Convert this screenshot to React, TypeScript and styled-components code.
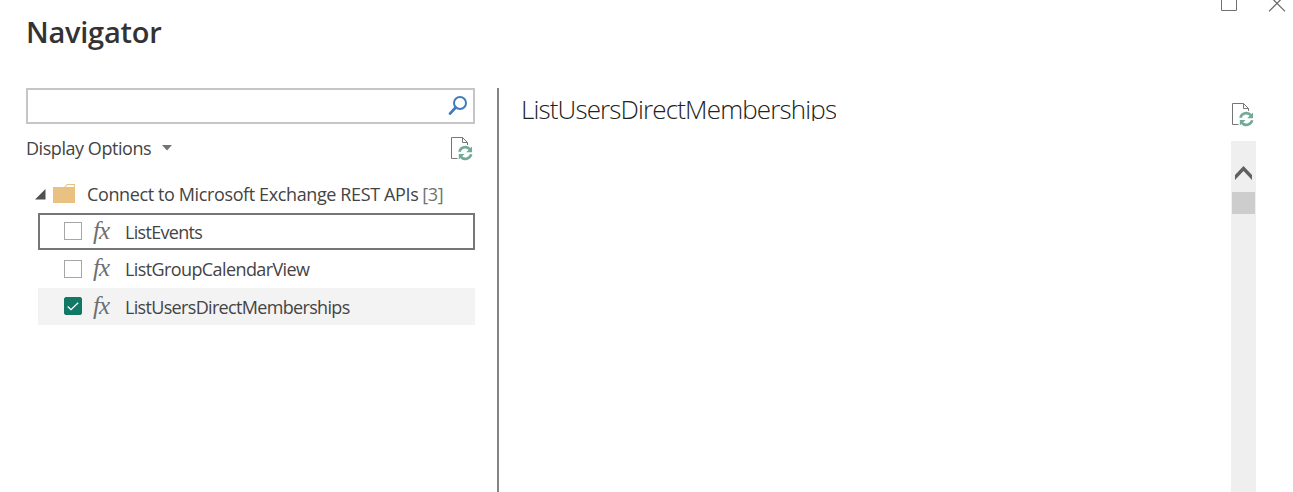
import React from "react";
import styled, { createGlobalStyle } from "styled-components";

const GlobalStyle = createGlobalStyle`
  *, *::before, *::after { box-sizing: border-box; }
  body {
    margin: 0;
    background: #fff;
    color: #444;
    font-family: "Open Sans", "Noto Sans", sans-serif;
    overflow: hidden;
  }
`;

const Dialog = styled.div`
  display: flex;
  flex-direction: column;
  width: 100%;
  height: 492px;
  overflow: hidden;
  background: #fff;
`;

const Header = styled.header`
  display: flex;
  justify-content: space-between;
  align-items: flex-start;
  flex: none;
  height: 88px;
  padding: 0 7px 0 26px;
`;

const Heading = styled.h1`
  margin: 12px 0 0;
  font-size: 29px;
  line-height: 40px;
  font-weight: 600;
  letter-spacing: -0.25px;
  color: #333;
`;

const WindowControls = styled.div`
  display: flex;
  gap: 30px;
`;

const Content = styled.main`
  display: grid;
  grid-template-columns: 449px 2px 1fr;
  column-gap: 22px;
  flex: 1;
  min-height: 0;
  padding: 0 37px 0 26px;
`;

const Sidebar = styled.aside`
  display: flex;
  flex-direction: column;
`;

const SearchBox = styled.div`
  display: flex;
  align-items: center;
  justify-content: flex-end;
  height: 36px;
  padding-right: 5px;
  border: 2px solid #c6c6c6;
`;

const OptionsBar = styled.div`
  display: flex;
  align-items: center;
  height: 48px;
  margin-bottom: 2px;
`;

const Label = styled.span<{ $spacing?: number }>`
  font-size: 18px;
  line-height: 24px;
  letter-spacing: ${({ $spacing = -0.38 }) => $spacing}px;
  white-space: nowrap;
`;

const DropArrow = styled.svg`
  margin-left: 11px;
  margin-right: auto;
`;

const FolderRow = styled.div`
  display: flex;
  align-items: center;
  height: 39px;
  padding-left: 9px;
`;

const ExpandArrow = styled.svg`
  margin-top: 2px;
`;

const FolderGlyph = styled.svg`
  margin: 0 12px 0 7px;
`;

const Count = styled(Label)`
  margin-left: 4px;
  color: #737373;
`;

const FunctionList = styled.div`
  display: grid;
  grid-template-rows: 37px 38px 37px;
  margin-left: 12px;
`;

const FunctionRow = styled.div<{ $focused?: boolean; $selected?: boolean }>`
  display: flex;
  align-items: center;
  padding-left: 24px;
  border: 2px solid ${({ $focused }) => ($focused ? "#767676" : "transparent")};
  background: ${({ $selected }) => ($selected ? "#f3f3f3" : "#fff")};
`;

const CheckBox = styled.span<{ $checked?: boolean }>`
  display: flex;
  align-items: center;
  justify-content: center;
  width: 18px;
  height: 18px;
  margin-bottom: 1px;
  border: 1px solid ${({ $checked }) => ($checked ? "#117865" : "#a6a6a6")};
  border-radius: ${({ $checked }) => ($checked ? 2 : 0)}px;
  background: ${({ $checked }) => ($checked ? "#117865" : "#fff")};
`;

const Fx = styled.span`
  width: 43px;
  padding-left: 11px;
  margin-top: -2px;
  font: italic 25px/30px "Liberation Serif", serif;
  letter-spacing: -1px;
  color: #6f6f6f;
`;

const Divider = styled.div`
  background: #848484;
`;

const Preview = styled.section`
  display: flex;
  justify-content: space-between;
  min-width: 0;
`;

const PreviewTitle = styled.h2`
  height: 33px;
  margin: 0;
  overflow: hidden;
  font-size: 26px;
  line-height: 43px;
  font-weight: 300;
  letter-spacing: -0.86px;
  color: #222;
  white-space: nowrap;
`;

const PreviewTools = styled.div`
  display: flex;
  flex-direction: column;
  width: 25px;
  padding-top: 14px;
`;

const ScrollTrack = styled.div`
  display: flex;
  flex-direction: column;
  align-items: center;
  flex: 1;
  margin-top: 14px;
  padding-top: 25px;
  background: #efefef;
`;

const ScrollThumb = styled.div`
  width: 23px;
  height: 22px;
  margin-top: 12px;
  background: #cdcdcd;
`;

const RefreshIcon = () => (
  <svg width="25" height="25" viewBox="0 0 25 25" fill="none">
    <path d="M7.5 22.5H1.5V1.5H12.5L17.5 6.5V9" stroke="#767676" />
    <path d="M12.5 1.5V6.5H17.5" stroke="#767676" />
    <path d="M9.4 15.8A6.1 6.1 0 0 1 20 13.4M21.2 18.2A6.1 6.1 0 0 1 10.6 20.6" stroke="#72aa98" strokeWidth="2.6" />
    <path d="M22 10.5V16.2H16.2ZM8.8 23.5V18H14.6Z" fill="#72aa98" />
  </svg>
);

const rows = [
  { name: "ListEvents", focused: true, spacing: -0.7 },
  { name: "ListGroupCalendarView", spacing: -0.6 },
  { name: "ListUsersDirectMemberships", selected: true, spacing: -0.67 },
];

export default function App() {
  return (
    <>
      <GlobalStyle />
      <Dialog>
        <Header>
          <Heading>Navigator</Heading>
          <WindowControls>
            <svg width="18" height="13" viewBox="0 0 18 13" fill="none" stroke="#707070">
              <path d="M1.5 0V10.5H16.5V0" />
            </svg>
            <svg width="18" height="13" viewBox="0 0 18 13" fill="none" stroke="#666" strokeWidth="1.2">
              <path d="M1 11.3L12.5 -.2M17 11.3L5.5 -.2" />
            </svg>
          </WindowControls>
        </Header>
        <Content>
          <Sidebar>
            <SearchBox>
              <svg width="20" height="22" viewBox="0 0 20 22" fill="none" stroke="#417cb8">
                <circle cx="12" cy="8" r="6" strokeWidth="2" />
                <path d="M7.7 12.5L2 18.6" strokeWidth="2.8" strokeLinecap="round" />
              </svg>
            </SearchBox>
            <OptionsBar>
              <Label $spacing={-0.45}>Display Options</Label>
              <DropArrow width="10" height="6" viewBox="0 0 10 6">
                <path d="M0 0H10L5 5.5Z" fill="#737373" />
              </DropArrow>
              <RefreshIcon />
            </OptionsBar>
            <FolderRow>
              <ExpandArrow width="11" height="11" viewBox="0 0 11 11">
                <path d="M10.5 0V10.5H0Z" fill="#505050" />
              </ExpandArrow>
              <FolderGlyph width="22" height="19" viewBox="0 0 22 19">
                <path d="M0 3H11L14 0H22V19H0Z" fill="#e9c282" />
                <path d="M12.4 3L14.4 1H21V3Z" fill="#fff" />
              </FolderGlyph>
              <Label>Connect to Microsoft Exchange REST APIs</Label>
              <Count>[3]</Count>
            </FolderRow>
            <FunctionList>
              {rows.map((row) => (
                <FunctionRow key={row.name} $focused={row.focused} $selected={row.selected}>
                  <CheckBox $checked={row.selected}>
                    {row.selected && (
                      <svg width="12" height="9" viewBox="0 0 12 9" fill="none">
                        <path d="M.7 4.5L4 7.7L11.2 .8" stroke="#fff" strokeWidth="1.3" />
                      </svg>
                    )}
                  </CheckBox>
                  <Fx>fx</Fx>
                  <Label $spacing={row.spacing}>{row.name}</Label>
                </FunctionRow>
              ))}
            </FunctionList>
          </Sidebar>
          <Divider />
          <Preview>
            <PreviewTitle>ListUsersDirectMemberships</PreviewTitle>
            <PreviewTools>
              <RefreshIcon />
              <ScrollTrack>
                <svg width="17" height="14" viewBox="0 0 17 14">
                  <path d="M8.5 0L17 9V14L8.5 5L0 14V9Z" fill="#606060" />
                </svg>
                <ScrollThumb />
              </ScrollTrack>
            </PreviewTools>
          </Preview>
        </Content>
      </Dialog>
    </>
  );
}
